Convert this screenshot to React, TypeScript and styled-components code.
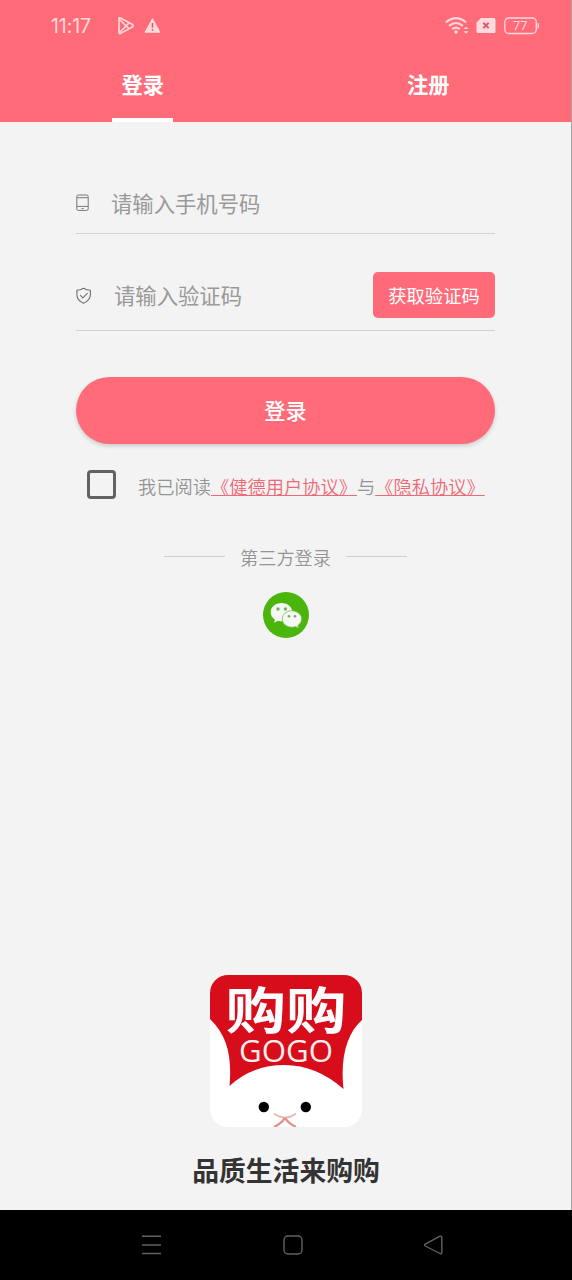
import React from 'react';
import styled, { createGlobalStyle } from 'styled-components';

const coral = '#ff6b78';

const GlobalStyle = createGlobalStyle`
  * { box-sizing: border-box; }
  body { margin: 0; background: #f3f3f3; }
  button, input { font-family: inherit; }
  svg { display: block; flex: none; }
`;

const Screen = styled.div`
  width: 572px;
  height: 1280px;
  display: flex;
  flex-direction: column;
  overflow: hidden;
  background: #f3f3f3;
  font-family: 'Noto Sans CJK SC', sans-serif;
`;

const Page = styled.div`
  flex: 1;
  display: flex;
  flex-direction: column;
  border-right: 1px solid rgba(90, 90, 90, 0.5);
  background: linear-gradient(${coral}, ${coral}) 0 0 / 100% 122px no-repeat;
`;

const Header = styled.header`
  height: 122px;
  display: flex;
  flex-direction: column;
`;

const StatusBar = styled.div`
  height: 52px;
  padding: 0 31px 0 51px;
  display: flex;
  align-items: center;
  color: #ffd9dc;
`;

const Clock = styled.span`
  width: 66px;
  font: 400 19.5px/52px Inter, sans-serif;
  letter-spacing: -0.1px;
`;

const StatusIcons = styled.div<{ $end?: boolean }>`
  display: flex;
  align-items: center;
  gap: ${p => (p.$end ? 7 : 9)}px;
  margin-left: ${p => (p.$end ? 'auto' : '0')};
`;

const Tabs = styled.nav`
  flex: 1;
  display: grid;
  grid-template-columns: 1fr 1fr;
`;

const Tab = styled.button<{ $active?: boolean }>`
  justify-self: center;
  width: 61px;
  padding: 0 0 2px;
  border: 0;
  border-bottom: 4px solid ${p => (p.$active ? '#fff' : 'transparent')};
  background: none;
  color: #fff;
  font-size: 21.3px;
  font-weight: 700;
  line-height: 64px;
  white-space: nowrap;
`;

const Form = styled.form`
  width: 419px;
  margin-left: 76px;
  padding-top: 51px;
  display: flex;
  flex-direction: column;
`;

const Field = styled.label<{ $height: number; $gap: number; $top?: number }>`
  height: ${p => p.$height}px;
  padding-top: ${p => p.$top ?? 0}px;
  display: flex;
  align-items: center;
  gap: ${p => p.$gap}px;
  border-bottom: 1px solid #d3d3d3;
`;

const Input = styled.input`
  flex: 1;
  min-width: 0;
  height: 40px;
  padding: 0 0 2px;
  border: 0;
  outline: 0;
  background: none;
  color: #444;
  font-size: 21.35px;
  &::placeholder { color: #999; opacity: 1; }
`;

const CodeButton = styled.button`
  width: 122px;
  height: 46px;
  padding: 0;
  margin-bottom: 1px;
  border: 0;
  border-radius: 5px;
  background: ${coral};
  color: #fff;
  font-size: 18.3px;
  line-height: 46px;
`;

const Submit = styled.button`
  height: 67px;
  margin-top: 46px;
  padding: 0 0 2px;
  border: 0;
  border-radius: 34px;
  background: ${coral};
  box-shadow: 0 2px 4px rgba(0, 0, 0, 0.17);
  color: #fff;
  font-size: 21.3px;
  font-weight: 500;
  line-height: 65px;
`;

const Agreement = styled.div`
  height: 30px;
  margin: 25px 0 0 11px;
  display: flex;
  align-items: center;
`;

const Checkbox = styled.span`
  width: 29px;
  height: 29px;
  margin-right: 22px;
  border: 3px solid #626262;
  border-radius: 4px;
`;

const AgreementText = styled.span`
  padding-top: 3px;
  color: #949494;
  font-size: 18.25px;
  font-weight: 350;
  line-height: 30px;
  white-space: nowrap;
`;

const Link = styled.a`
  color: #ee6976;
  text-decoration: underline;
  text-decoration-thickness: 1px;
  text-underline-offset: 1px;
  text-decoration-skip-ink: none;
`;

const ThirdParty = styled.section`
  margin-top: 43px;
  display: flex;
  flex-direction: column;
  align-items: center;
  gap: 20px;
`;

const Divider = styled.div`
  height: 30px;
  display: flex;
  align-items: center;
  gap: 15px;
  color: #949494;
  font-size: 18.2px;
  font-weight: 350;
  line-height: 30px;
  &::before, &::after {
    content: '';
    width: 61px;
    height: 1px;
    margin-bottom: 2px;
    background: #d0d0d0;
  }
`;

const Brand = styled.footer`
  width: 572px;
  margin-top: auto;
  padding-bottom: 20px;
  display: flex;
  flex-direction: column;
  align-items: center;
  gap: 23px;
`;

const Slogan = styled.div`
  color: #333;
  font-size: 26.8px;
  font-weight: 700;
  line-height: 40px;
`;

const SystemNav = styled.div`
  height: 70px;
  padding: 0 129px 0 141px;
  display: flex;
  align-items: center;
  justify-content: space-between;
  background: #000;
`;

const PlayIcon = () => (
  <svg width="18" height="20" viewBox="0 0 18 20" fill="none" stroke="currentColor" strokeWidth="1.6" strokeLinejoin="round">
    <path d="M2 2.7Q2 1.2 3.5 2L15 8.3Q17.4 9.8 15 11.3L3.5 17.4Q2 18 2 16.6Z" />
    <path d="M2.6 3.5 12.3 13M2.6 16.5 12.3 6.8" />
  </svg>
);

const WarningIcon = () => (
  <svg width="17" height="20" viewBox="0 0 17 20">
    <path d="M8.5 2.7 16 16.2H1Z" fill="currentColor" stroke="currentColor" strokeLinejoin="round" />
    <path d="M8.5 7V11.8M8.5 13.1V14.8" stroke="#d85e6a" strokeWidth="1.6" />
  </svg>
);

const WifiIcon = () => (
  <svg width="24" height="20" viewBox="0 0 24 20" fill="none" stroke="currentColor" strokeWidth="2">
    <path d="M.8 6.4Q11 -2.2 21.2 6.4M4 9.9Q11 4 18 9.9M7.3 13.1Q11 10.2 14.7 13.1" />
    <circle cx="11" cy="16" r="1.7" fill="currentColor" stroke="none" />
    <path d="M18.4 13 20.9 10.7 23.4 13ZM18.4 15.3 20.9 17.6 23.4 15.3Z" fill="currentColor" stroke="none" />
  </svg>
);

const SimIcon = () => (
  <svg width="20" height="19" viewBox="0 0 20 19">
    <path d="M5 1H18Q19.5 1 19.5 2.5V14.5Q19.5 16 18 16H2Q.5 16 .5 14.5V5.5Z" fill="currentColor" />
    <path d="M7.3 5.7 12.7 11.1M12.7 5.7 7.3 11.1" stroke="#d85e6a" strokeWidth="2" />
  </svg>
);

const BatteryIcon = () => (
  <svg width="37" height="18" viewBox="0 0 37 18">
    <rect x="1.8" y="1" width="31.5" height="15.5" rx="4" fill="none" stroke="currentColor" strokeWidth="1.3" />
    <path d="M34.5 5.5Q36 6 36 8.8T34.5 12Z" fill="currentColor" />
    <text x="17.3" y="13.4" textAnchor="middle" fill="currentColor" fontFamily="Roboto, sans-serif" fontSize="12.8">77</text>
  </svg>
);

const PhoneIcon = () => (
  <svg width="14" height="18" viewBox="0 0 14 18" fill="none" stroke="#777" strokeWidth="1">
    <rect x=".8" y="1" width="11.4" height="15.4" rx="1.5" />
    <path d="M1 3.7H12M1 12.4H12M5.5 14.5H7.5" />
  </svg>
);

const ShieldIcon = () => (
  <svg width="16" height="18" viewBox="0 0 16 18" fill="none" stroke="#707070" strokeWidth="1.1" strokeLinejoin="round">
    <path d="M7.5 1.3Q4.5 3.3 .9 3.3V7.8Q1 13.6 7.5 16.2Q14 13.6 14.4 7.8V3.3Q10.5 3.3 7.5 1.3Z" />
    <path d="M4.2 8.2 6.8 10.8 11.6 6.2" />
  </svg>
);

const WechatIcon = () => (
  <svg width="46" height="46" viewBox="0 0 46 46">
    <circle cx="23" cy="23" r="23" fill="#4ab50b" />
    <path d="M18.5 11C12.2 11 7.7 15.1 7.7 20.2C7.7 23.3 9.2 25.8 11.8 27.4L11 30.7 15.2 28.8C24 31 29.3 25.5 29.3 20C29.3 15 24.8 11 18.5 11Z" fill="#f5f7f2" />
    <path d="M28.7 18.8C23.3 18.8 19.3 22.5 19.3 27C19.3 31.7 23.5 35.2 28.8 35.2Q31 35.2 32.5 34.6L35.4 36 34.9 33.4C37.3 31.7 38.6 29.6 38.6 27C38.6 22.5 34.2 18.8 28.7 18.8Z" fill="#f5f7f2" stroke="#7bbf55" strokeWidth=".8" />
    <g fill="#7aaa5f">
      <circle cx="15" cy="17" r="1.7" />
      <circle cx="22.4" cy="17" r="1.7" />
      <circle cx="26" cy="24.2" r="1.3" />
      <circle cx="32" cy="24.2" r="1.3" />
    </g>
  </svg>
);

const BrandLogo = () => (
  <svg width="152" height="152" viewBox="0 0 152 152" overflow="visible">
    <defs>
      <clipPath id="tile"><rect width="152" height="152" rx="18" /></clipPath>
    </defs>
    <g clipPath="url(#tile)">
      <rect width="152" height="152" fill="#fff" />
      <path d="M0 0H152V45C137 58 130 83 133.5 114Q106 90 75 90Q42 90 19.5 111C22 83 18 61 0 44Z" fill="#d80d1b" />
      <circle cx="53.8" cy="132" r="5.2" fill="#000" />
      <circle cx="95.8" cy="132" r="5.2" fill="#000" />
      <path d="M64 138.5Q69 142.500 75 142.500Q81 142.500 86 138.500" fill="none" stroke="#efb9b4" strokeWidth="2.2" />
      <path d="M75 143Q71 149 64 152M75 143Q79 149 86 152" fill="none" stroke="#e0938c" strokeWidth="2.4" />
    </g>
    <text x="15.5" y="54" fill="#fff" fontFamily="'Noto Sans CJK SC', sans-serif" fontWeight="700" fontSize="50" textLength="121" lengthAdjust="spacingAndGlyphs">购购</text>
    <text x="29" y="87" fill="#fff0ec" fontFamily="'Open Sans', sans-serif" fontSize="30.5" textLength="94" lengthAdjust="spacingAndGlyphs">GOGO</text>
  </svg>
);

const MenuIcon = () => (
  <svg width="21" height="22" viewBox="0 0 21 22" stroke="#626262" strokeWidth="1.5">
    <path d="M1 2.2H20M1 11H20M1 19.6H20" />
  </svg>
);

const HomeIcon = () => (
  <svg width="20" height="20" viewBox="0 0 20 20" fill="none" stroke="#626262" strokeWidth="1.4">
    <rect x="1" y="1" width="18" height="18" rx="4" />
  </svg>
);

const BackIcon = () => (
  <svg width="20" height="20" viewBox="0 0 20 20" fill="none" stroke="#626262" strokeWidth="1.4" strokeLinejoin="round">
    <path d="M2.2 9.2 17 1.2Q18.8 .7 18.8 2.5V17.5Q18.8 19.3 17 18.5L2.2 11Q1 10 2.2 9.2Z" />
  </svg>
);

export default function App() {
  return (
    <Screen>
      <GlobalStyle />
      <Page>
        <Header>
          <StatusBar>
            <Clock>11:17</Clock>
            <StatusIcons><PlayIcon /><WarningIcon /></StatusIcons>
            <StatusIcons $end><WifiIcon /><SimIcon /><BatteryIcon /></StatusIcons>
          </StatusBar>
          <Tabs>
            <Tab $active>登录</Tab>
            <Tab>注册</Tab>
          </Tabs>
        </Header>
        <Form>
          <Field $height={61} $gap={21}>
            <PhoneIcon />
            <Input placeholder="请输入手机号码" />
          </Field>
          <Field as="div" $height={97} $gap={22} $top={27}>
            <ShieldIcon />
            <Input placeholder="请输入验证码" />
            <CodeButton type="button">获取验证码</CodeButton>
          </Field>
          <Submit type="button">登录</Submit>
          <Agreement>
            <Checkbox role="checkbox" aria-checked={false} />
            <AgreementText>
              我已阅读<Link>《健德用户协议》</Link>与<Link>《隐私协议》</Link>
            </AgreementText>
          </Agreement>
        </Form>
        <ThirdParty>
          <Divider>第三方登录</Divider>
          <WechatIcon />
        </ThirdParty>
        <Brand>
          <BrandLogo />
          <Slogan>品质生活来购购</Slogan>
        </Brand>
      </Page>
      <SystemNav>
        <MenuIcon />
        <HomeIcon />
        <BackIcon />
      </SystemNav>
    </Screen>
  );
}
